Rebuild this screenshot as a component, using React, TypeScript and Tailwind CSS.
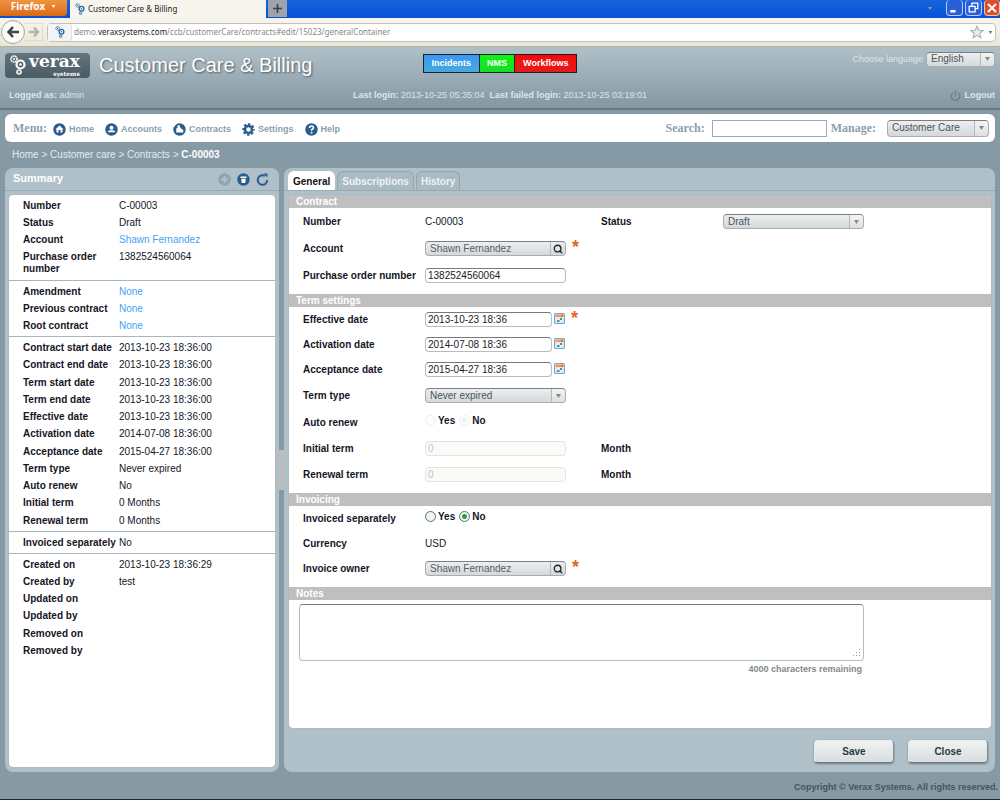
import { useState } from 'react';
import type { ReactNode } from 'react';
import { Search } from 'lucide-react';

type Row = { label: string; value?: string; link?: boolean };

const SUMMARY: { rows: Row[]; height: string }[] = [
  {
    height: 'h-[81px]',
    rows: [
      { label: 'Number', value: 'C-00003' },
      { label: 'Status', value: 'Draft' },
      { label: 'Account', value: 'Shawn Fernandez', link: true },
      { label: 'Purchase order number', value: '1382524560064' },
    ],
  },
  {
    height: 'h-[51px]',
    rows: [
      { label: 'Amendment', value: 'None', link: true },
      { label: 'Previous contract', value: 'None', link: true },
      { label: 'Root contract', value: 'None', link: true },
    ],
  },
  {
    height: 'h-[190px]',
    rows: [
      { label: 'Contract start date', value: '2013-10-23 18:36:00' },
      { label: 'Contract end date', value: '2013-10-23 18:36:00' },
      { label: 'Term start date', value: '2013-10-23 18:36:00' },
      { label: 'Term end date', value: '2013-10-23 18:36:00' },
      { label: 'Effective date', value: '2013-10-23 18:36:00' },
      { label: 'Activation date', value: '2014-07-08 18:36:00' },
      { label: 'Acceptance date', value: '2015-04-27 18:36:00' },
      { label: 'Term type', value: 'Never expired' },
      { label: 'Auto renew', value: 'No' },
      { label: 'Initial term', value: '0 Months' },
      { label: 'Renewal term', value: '0 Months' },
    ],
  },
  { height: 'h-[17px]', rows: [{ label: 'Invoiced separately', value: 'No' }] },
  {
    height: 'h-[103px]',
    rows: [
      { label: 'Created on', value: '2013-10-23 18:36:29' },
      { label: 'Created by', value: 'test' },
      { label: 'Updated on' },
      { label: 'Updated by' },
      { label: 'Removed on' },
      { label: 'Removed by' },
    ],
  },
];

const TABS = ['General', 'Subscriptions', 'History'];

/* ---------- icons ---------- */

function Gears({ color, className }: { color: string; className: string }) {
  return (
    <svg viewBox="0 0 16 20" className={className} fill="none" stroke={color}>
      <circle cx="4" cy="4" r="3" strokeWidth="1.6" strokeDasharray="1.6 0.5" />
      <circle cx="4" cy="4" r="1" fill={color} stroke="none" />
      <circle cx="10.5" cy="9.5" r="4" strokeWidth="2.2" />
      <circle cx="10.5" cy="9.5" r="1.3" fill={color} stroke="none" />
      <circle cx="9" cy="17" r="2.1" strokeWidth="1.4" />
      <circle cx="9" cy="17" r="0.6" fill={color} stroke="none" />
    </svg>
  );
}

function Disc({ children }: { children: ReactNode }) {
  return (
    <svg viewBox="0 0 26 26" className="size-[13px] shrink-0">
      <circle cx="13" cy="13" r="12.5" fill="#2a5d8c" />
      {children}
    </svg>
  );
}

const MENU: { label: string; icon: ReactNode }[] = [
  {
    label: 'Home',
    icon: (
      <Disc>
        <path d="M13 5 L21 12.5 H19 V19 H15 V14 H11 V19 H7 V12.5 H5 Z" fill="#fff" />
      </Disc>
    ),
  },
  {
    label: 'Accounts',
    icon: (
      <Disc>
        <circle cx="13" cy="9.5" r="4" fill="#fff" />
        <path d="M5.5 18.5 Q6 14.5 10 14.5 H16 Q20 14.5 20.5 18.5 Z" fill="#fff" />
      </Disc>
    ),
  },
  {
    label: 'Contracts',
    icon: (
      <Disc>
        <path d="M9 4.5 H13 L15 10 L20.5 14 V19 H6.5 V10.5 H9 Z" fill="#fff" />
        <path d="M0 0 H8 L3 7 L0 8 Z" fill="#fff" />
      </Disc>
    ),
  },
  {
    label: 'Settings',
    icon: (
      <svg viewBox="0 0 26 26" className="size-[13px] shrink-0" fill="none" stroke="#2a5d8c">
        <circle cx="13" cy="13" r="7" strokeWidth="5" />
        <circle cx="13" cy="13" r="10.5" strokeWidth="4" strokeDasharray="4.8 3.45" strokeDashoffset="2.4" />
      </svg>
    ),
  },
  {
    label: 'Help',
    icon: (
      <Disc>
        <path d="M9 10 Q9 6 13 6 Q17 6 17 9.5 Q17 11.5 13.2 13.5 V15.5" fill="none" stroke="#fff" strokeWidth="3" />
        <circle cx="13.2" cy="19.3" r="1.9" fill="#fff" />
      </Disc>
    ),
  },
];

function CalendarIcon() {
  return (
    <svg viewBox="0 0 22 22" className="size-[11px]">
      <rect x="1" y="1" width="20" height="20" rx="1" fill="#d6e6f8" stroke="#7ba4d4" strokeWidth="2" />
      <rect x="3" y="3" width="16" height="5" fill="#f79a4b" />
      <path d="M14 4 V8 H18 V3" fill="#e46a1c" />
      <path d="M4 12 H18 M4 16 H18 M8 9 V19 M13 9 V19" stroke="#fff" />
      <rect x="12" y="10" width="4" height="4" fill="#3aa35a" />
      <rect x="6" y="14" width="5" height="4" fill="#4c9a7c" />
    </svg>
  );
}

function Arrow({ className }: { className: string }) {
  return (
    <svg viewBox="0 0 10 8" className={className} fill="currentColor">
      <path d="M0 0 H10 L5 8 Z" />
    </svg>
  );
}

/* ---------- form controls ---------- */

type DropDownProps = { id: string; value: string; className: string };

function DropDown({ id, value, className }: DropDownProps) {
  return (
    <span className={`relative inline-flex ${className}`}>
      <select
        id={id}
        defaultValue={value}
        className="h-full w-full appearance-none rounded border border-[#a9adb0] border-t-[#7c7f82] bg-gradient-to-b from-[#eceeef] to-[#d3d9dc] pr-4 pl-1 leading-none text-[#4f5356] outline-none"
      >
        <option>{value}</option>
      </select>
      <span className="pointer-events-none absolute inset-y-px right-px flex w-[14px] items-center justify-center rounded-r border-l border-[#b3b7ba] bg-gradient-to-b from-[#f4f4f4] to-[#dddfe0] text-[#85898c]">
        <Arrow className="h-1 w-[5px]" />
      </span>
    </span>
  );
}

function Lookup({ id, value }: { id: string; value: string }) {
  return (
    <span className="flex h-[15px] w-[141px] overflow-hidden rounded border border-[#a9adb0] border-t-[#7c7f82] bg-gradient-to-b from-[#eceeef] to-[#d3d9dc]">
      <input id={id} readOnly defaultValue={value} className="min-w-0 flex-1 bg-transparent pl-1 text-[#5a5e61] outline-none" />
      <button aria-label="Find account" className="flex w-[15px] items-center justify-center border-l border-[#b3b7ba] text-[#222]">
        <Search size={10} strokeWidth={3.2} />
      </button>
    </span>
  );
}

function TextBox({ id, value, className, disabled }: { id: string; value: string; className: string; disabled?: boolean }) {
  return (
    <input
      id={id}
      defaultValue={value}
      disabled={disabled}
      className={`h-[15px] rounded border border-[#b9bcbe] border-t-[#77797b] bg-white px-0.5 text-[#1c1c28] outline-none disabled:border-[#e3e3df] disabled:bg-[#fafaf7] disabled:text-[#c4c4c0] ${className}`}
    />
  );
}

function DateBox({ id, value }: { id: string; value: string }) {
  return (
    <>
      <TextBox id={id} value={value} className="w-[127px]" />
      <button aria-label="Pick a date" className="ml-0.5 pb-0.5">
        <CalendarIcon />
      </button>
    </>
  );
}

function YesNo({ name, disabled }: { name: string; disabled?: boolean }) {
  return (
    <span className="flex items-center gap-1 pb-1 font-bold" role="radiogroup" aria-label={name}>
      {['Yes', 'No'].map((option) => (
        <label key={option} className="flex items-center gap-0.5">
          <input
            type="radio"
            name={name}
            disabled={disabled}
            defaultChecked={option === 'No'}
            className="size-[11px] appearance-none rounded-full border border-[#4d7396] bg-[#f4f4f0] checked:bg-[radial-gradient(circle,#2aa52a_2px,#f4f4f0_3px)] disabled:opacity-10"
          />
          {option}
        </label>
      ))}
    </span>
  );
}

function Required() {
  return <span className="ml-1.5 h-[15px] text-lg leading-3 font-bold text-[#e2662b]">*</span>;
}

function SectionBar({ title }: { title: string }) {
  return <h3 className="h-[13px] bg-[#bfbfbf] pl-[7px] text-[10px] leading-[14px] font-bold text-white">{title}</h3>;
}

type FieldProps = { label: string; htmlFor?: string; children: ReactNode; tall?: boolean };

function Field({ label, htmlFor, children, tall }: FieldProps) {
  return (
    <div className={`flex items-center pl-3.5 ${tall ? 'h-[27px]' : 'h-[25px]'}`}>
      {htmlFor ? (
        <label htmlFor={htmlFor} className="w-[122px] shrink-0 font-bold">{label}</label>
      ) : (
        <span className="w-[122px] shrink-0 font-bold">{label}</span>
      )}
      {children}
    </div>
  );
}

/* ---------- browser frame ---------- */

function BrowserFrame() {
  return (
    <div className="font-['Noto_Sans','Open_Sans',sans-serif]">
      <div className="flex h-[18px] items-start bg-gradient-to-b from-[#1564dd] to-[#0a50d8]">
        <button className="flex h-4 w-[67px] items-center justify-center gap-1.5 rounded-br bg-gradient-to-b from-[#f09440] to-[#d96a10] pb-1 text-[10px] font-bold text-white">
          Firefox
          <Arrow className="h-[3px] w-[5px]" />
        </button>
        <div className="ml-[3px] flex h-[18px] w-[196px] items-center gap-0.5 bg-[#f7f5ee] pl-1 text-[8px] text-[#222]">
          <Gears color="#1d6a9c" className="h-3 w-3" />
          Customer Care &amp; Billing
        </div>
        <button aria-label="New tab" className="ml-0.5 flex h-[17px] w-[19px] items-center justify-center bg-[#9da3ac]">
          <svg viewBox="0 0 9 9" className="size-[9px]" stroke="#3a3f47" strokeWidth="1.6">
            <path d="M4.5 0 V9 M0 4.5 H9" />
          </svg>
        </button>
        <div className="ml-auto flex h-4 items-center gap-0.5">
          <Arrow className="mr-3 h-[3px] w-1 text-[#9a9a9a]" />
          <button aria-label="Minimize" className="h-4 w-[17px] rounded-sm border border-t-0 border-[#b9cdf5] bg-[#2a5fdc]">
            <svg viewBox="0 0 14 14"><path d="M3 10.5 H8" stroke="#fff" strokeWidth="2.4" /></svg>
          </button>
          <button aria-label="Restore" className="h-4 w-[17px] rounded-sm border border-t-0 border-[#b9cdf5] bg-[#2a5fdc]">
            <svg viewBox="0 0 14 14" fill="none" stroke="#fff" strokeWidth="1.2">
              <path d="M3 6 H8.5 V11 H3 Z M5.5 6 V3 H11 V8 H8.5" />
            </svg>
          </button>
          <button aria-label="Close window" className="h-4 w-4 rounded-sm border border-t-0 border-[#f1c4b8] bg-[#dd4f2a]">
            <svg viewBox="0 0 14 14"><path d="M3 3 L11 11 M11 3 L3 11" stroke="#fff" strokeWidth="2" /></svg>
          </button>
        </div>
      </div>
      <div className="flex h-[29px] items-center border-b border-[#b5b19c] bg-gradient-to-b from-[#f7f5ee] to-[#ebe7d6] pr-1 pl-px">
        <button aria-label="Back" className="flex size-6 items-center justify-center rounded-full border border-[#a4a39c] bg-[#fbfaf7]">
          <svg viewBox="0 0 14 14" className="size-3.5" fill="none" stroke="#3b434b" strokeWidth="2.6">
            <path d="M7 2 L2.5 7 L7 12 M3 7 H13" />
          </svg>
        </button>
        <button aria-label="Forward" className="flex h-[18px] w-[18px] items-center justify-center border-y border-r border-[#dedbd0]">
          <svg viewBox="0 0 14 14" className="size-3" fill="none" stroke="#b3b3b0" strokeWidth="3">
            <path d="M7 2 L11.5 7 L7 12 M11 7 H1" />
          </svg>
        </button>
        <div className="ml-1 flex h-[19px] flex-1 items-center rounded border border-[#c3c0b4] bg-white text-[8px] text-[#888]">
          <span className="flex h-full w-6 items-center justify-center border-r border-[#e3e3e3] bg-[#f2f4f6]">
            <Gears color="#1d6a9c" className="h-3 w-3" />
          </span>
          <span className="flex-1 pl-0.5">
            demo.<span className="text-[#1a1a1a]">veraxsystems.com</span>/ccb/customerCare/contracts#edit/15023/generalContainer
          </span>
          <svg viewBox="0 0 24 24" className="mr-1 size-[14px]" fill="#ededed" stroke="#a8a8a8" strokeWidth="1.8">
            <path d="M12 2 L15 9 L22.5 9.5 L16.7 14.5 L18.5 22 L12 17.8 L5.5 22 L7.3 14.5 L1.5 9.5 L9 9 Z" />
          </svg>
          <Arrow className="mr-0.5 h-[3px] w-[5px] text-[#777]" />
        </div>
      </div>
    </div>
  );
}

/* ---------- application ---------- */

function Header() {
  return (
    <header className="grid h-[63px] grid-cols-[1fr_auto_1fr] grid-rows-[36px_1fr] items-center border-b-2 border-[#6a7a83] bg-gradient-to-b from-[#b0c0c8] to-[#8498a2] pr-[5px] pl-[5px] text-[9px] text-[#dde5e9]">
      <div className="flex items-center gap-[9px]">
        <div className="flex h-[25px] w-[85px] items-center rounded bg-gradient-to-b from-[#63747d] to-[#4b5b64] pl-[5px] text-white">
          <Gears color="#fff" className="h-5 w-4" />
          <div className="flex flex-col items-end pl-[3px] font-['DejaVu_Serif',serif] font-bold">
            <span className="text-[17px] leading-[17px]">verax</span>
            <span className="text-[6px] leading-[7px]">systems</span>
          </div>
        </div>
        <h1 className="text-[20px] leading-6 whitespace-nowrap text-white [text-shadow:1px_1px_2px_#4c5a62]">
          Customer Care &amp; Billing
        </h1>
      </div>
      <div className="-mt-1 flex h-[19px] justify-self-center border border-[#1b2024] font-bold text-white [text-shadow:1px_1px_1px_#00000066]">
        <button className="border-r border-[#1b2024] bg-gradient-to-b from-[#3797f5] to-[#4aa9dd] px-2 pt-px">Incidents</button>
        <button className="border-r border-[#1b2024] bg-gradient-to-b from-[#0df50d] to-[#18dc26] px-[7px] pt-px">NMS</button>
        <button className="bg-gradient-to-b from-[#fa0505] to-[#e01c1c] px-2 pt-px">Workflows</button>
      </div>
      <div className="-mt-3 flex items-center justify-end gap-[3px]">
        <label htmlFor="language" className="pt-0.5">Choose language</label>
        <DropDown id="language" value="English" className="h-[15px] w-[69px] text-[10px]" />
      </div>
      <p className="pl-1"><b>Logged as:</b> admin</p>
      <p>
        <b>Last login:</b> 2013-10-25 05:35:04&nbsp; <b>Last failed login:</b> 2013-10-25 03:19:01
      </p>
      <a href="#logout" className="flex items-center gap-1 justify-self-end font-bold">
        <svg viewBox="0 0 22 24" className="h-3 w-[11px]" fill="none" stroke="#6d7f89" strokeWidth="2.6">
          <path d="M11 1 V13 M6 5.5 A8.5 8.5 0 1 0 16 5.5" />
        </svg>
        Logout
      </a>
    </header>
  );
}

function MenuBar() {
  return (
    <nav className="mx-[5px] mt-1 flex h-7 items-center rounded-md bg-white pr-1.5 pl-2 text-[9px] font-bold text-[#8a9faa]">
      <span className="mr-1.5 font-['Liberation_Serif',serif] text-[12px]">Menu:</span>
      <ul className="flex gap-[11px] pt-0.5">
        {MENU.map((item) => (
          <li key={item.label}>
            <a href="#menu" className="flex items-center gap-[3px]">
              {item.icon}
              <span className="pt-0.5">{item.label}</span>
            </a>
          </li>
        ))}
      </ul>
      <label htmlFor="search" className="mr-[7px] ml-auto font-['Liberation_Serif',serif] text-[12px]">Search:</label>
      <input id="search" className="h-[17px] w-[115px] border border-[#8eabc8] bg-white outline-none" />
      <label htmlFor="manage" className="mr-[11px] ml-1 font-['Liberation_Serif',serif] text-[12px]">Manage:</label>
      <DropDown id="manage" value="Customer Care" className="h-[17px] w-[102px] text-[10px] font-normal" />
    </nav>
  );
}

function Summary() {
  return (
    <aside className="flex w-[274px] shrink-0 flex-col rounded-lg bg-[#b0c0c8] px-1 pb-[5px]">
      <div className="-mx-1 flex h-[23px] items-center gap-[6px] border-b border-[#97abb6] pr-2.5 pl-2">
        <h2 className="mr-auto pb-0.5 text-[11px] leading-5 font-bold text-white">Summary</h2>
        <button aria-label="Add" disabled>
          <svg viewBox="0 0 26 26" className="size-[13px]">
            <circle cx="13" cy="13" r="12.5" fill="#8da5b5" />
            <path d="M13 6 V20 M6 13 H20" stroke="#b0c0c8" strokeWidth="4" />
          </svg>
        </button>
        <button aria-label="Delete">
          <Disc>
            <path d="M7 7 H19 V10 H7 Z M8.5 11.5 H17.5 L16.5 20 H9.5 Z" fill="#fff" />
          </Disc>
        </button>
        <button aria-label="Refresh">
          <svg viewBox="0 0 26 26" className="size-[13px]" fill="none" stroke="#2a5d8c" strokeWidth="4">
            <path d="M18 6 A9.5 9.5 0 1 0 22.5 14" />
            <path d="M15 1 H23 V9 Z" fill="#2a5d8c" stroke="none" />
          </svg>
        </button>
      </div>
      <div className="mt-1 flex-1 rounded bg-white shadow-[0_0_1px_#7d929d]">
        {SUMMARY.map((group, i) => (
          <div key={i} className="border-b border-[#a5b7c0] py-0.5 pl-3.5 last:border-b-0">
            <table className={`w-full text-left ${group.height}`}>
              <tbody>
                {group.rows.map((row) => (
                  <tr key={row.label} className="align-top">
                    <th scope="row" className="w-24 pt-[3px] leading-3 font-bold">{row.label}</th>
                    <td className="pt-[3px] leading-3">
                      {row.link ? <a href="#details" className="text-[#3fa3f5]">{row.value}</a> : row.value}
                    </td>
                  </tr>
                ))}
              </tbody>
            </table>
          </div>
        ))}
      </div>
    </aside>
  );
}

function ContractForm() {
  return (
    <form className="flex-1 overflow-hidden rounded bg-white shadow-[0_0_1px_#7d929d]" onSubmit={(e) => e.preventDefault()}>
      <SectionBar title="Contract" />
      <div className="pb-[5px]">
        <Field label="Number" tall>
          <span className="w-44">C-00003</span>
          <label htmlFor="status" className="w-[122px] font-bold">Status</label>
          <DropDown id="status" value="Draft" className="h-[15px] w-[141px]" />
        </Field>
        <Field label="Account" htmlFor="account" tall>
          <Lookup id="account" value="Shawn Fernandez" />
          <Required />
        </Field>
        <Field label="Purchase order number" htmlFor="order" tall>
          <TextBox id="order" value="1382524560064" className="w-[141px]" />
        </Field>
      </div>
      <SectionBar title="Term settings" />
      <div className="pb-[5px]">
        <Field label="Effective date" htmlFor="effective">
          <DateBox id="effective" value="2013-10-23 18:36" />
          <Required />
        </Field>
        <Field label="Activation date" htmlFor="activation">
          <DateBox id="activation" value="2014-07-08 18:36" />
        </Field>
        <Field label="Acceptance date" htmlFor="acceptance">
          <DateBox id="acceptance" value="2015-04-27 18:36" />
        </Field>
        <Field label="Term type" htmlFor="termtype" tall>
          <DropDown id="termtype" value="Never expired" className="h-[15px] w-[141px]" />
        </Field>
        <Field label="Auto renew" tall>
          <YesNo name="Auto renew" disabled />
        </Field>
        <Field label="Initial term" htmlFor="initial">
          <TextBox id="initial" value="0" className="mr-[35px] w-[141px]" disabled />
          <b>Month</b>
        </Field>
        <Field label="Renewal term" htmlFor="renewal" tall>
          <TextBox id="renewal" value="0" className="mr-[35px] w-[141px]" disabled />
          <b>Month</b>
        </Field>
      </div>
      <SectionBar title="Invoicing" />
      <div className="pb-[6px]">
        <Field label="Invoiced separately">
          <YesNo name="Invoiced separately" />
        </Field>
        <Field label="Currency">USD</Field>
        <Field label="Invoice owner" htmlFor="owner">
          <Lookup id="owner" value="Shawn Fernandez" />
          <Required />
        </Field>
      </div>
      <SectionBar title="Notes" />
      <div className="mt-1 ml-2.5 max-w-[565px]">
        <div className="relative">
          <textarea
            aria-label="Notes"
            className="block h-[57px] w-full resize-none rounded border border-[#b9bcbe] border-t-[#77797b] bg-white p-1 outline-none"
          />
          <svg viewBox="0 0 9 9" className="pointer-events-none absolute right-[3px] bottom-[3px] size-[9px]" fill="#999">
            <path d="M7 0h1v1h-1z M4 3h1v1h-1z M7 3h1v1h-1z M1 6h1v1h-1z M4 6h1v1h-1z M7 6h1v1h-1z" />
          </svg>
        </div>
        <p className="pt-0.5 pr-0.5 text-right text-[9px] leading-3 font-bold text-[#83878a]">4000 characters remaining</p>
      </div>
    </form>
  );
}

export default function App() {
  const [tab, setTab] = useState('General');
  const action =
    "h-[23px] w-20 rounded border border-[#e8eced] border-r-[#7e8a90] border-b-[#6f7b81] bg-gradient-to-b from-[#f0f2f2] to-[#d8dddf] font-bold text-[#263c44] shadow-[0_1px_2px_#6f7b81]";

  return (
    <div className="flex min-h-screen flex-col border-b border-[#1d262b] bg-[#859aa5] font-['Liberation_Sans',Arial,sans-serif] text-[10px] text-[#15151f]">
      <BrowserFrame />
      <Header />
      <MenuBar />
      <p className="pl-3 text-[10px] leading-[26px] text-[#e4eaed]">
        <a href="#home">Home</a> &gt; <a href="#care">Customer care</a> &gt; <a href="#contracts">Contracts</a> &gt;{' '}
        <b className="text-white">C-00003</b>
      </p>
      <main className="flex flex-1 px-[5px]">
        <Summary />
        <div className="h-10 w-[5px] shrink-0 self-center bg-[#bdbdbd]" />
        <section className="flex flex-1 flex-col rounded-lg bg-[#b0c0c8] pr-1 pl-[5px]">
          <div role="tablist" className="-mr-1 -ml-[5px] flex h-[23px] items-end gap-0.5 border-b border-[#97abb6] px-1">
            {TABS.map((name) => (
              <button
                key={name}
                role="tab"
                aria-selected={tab === name}
                onClick={() => setTab(name)}
                className="h-[19px] rounded-t-md border border-b-0 border-[#93a7b2] bg-[#a9bac3] px-1 font-bold text-[#eef2f4] aria-selected:border-white aria-selected:bg-white aria-selected:text-[#111]"
              >
                {name}
              </button>
            ))}
          </div>
          <div className="mt-1 flex flex-1 flex-col">
            <ContractForm />
          </div>
          <div className="flex h-11 items-center justify-end gap-3.5 pt-0.5 pr-[3px]">
            <button className={action}>Save</button>
            <button className={action}>Close</button>
          </div>
        </section>
      </main>
      <footer className="h-[27px] pr-0.5 pt-[3px] text-right text-[9px] leading-6 font-bold text-[#45545d]">
        Copyright © Verax Systems. All rights reserved.
      </footer>
    </div>
  );
}
